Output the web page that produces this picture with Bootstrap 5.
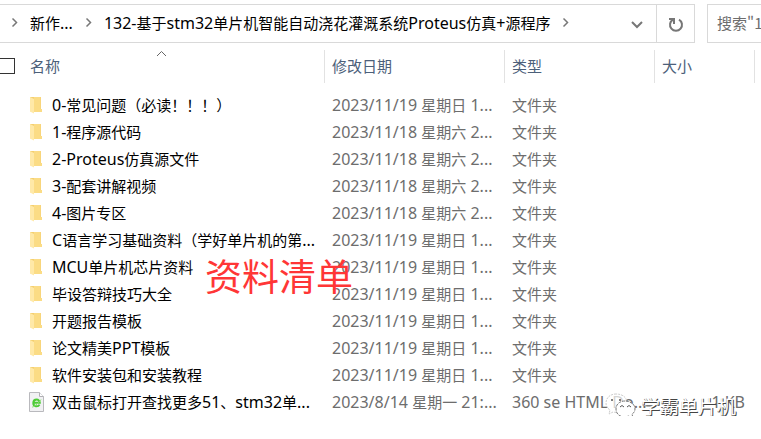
<!DOCTYPE html>
<html lang="zh-CN">
<head>
<meta charset="utf-8">
<meta name="viewport" content="width=device-width, initial-scale=1">
<title>文件资源管理器</title>
<link href="https://cdn.jsdelivr.net/npm/bootstrap@5.3.0/dist/css/bootstrap.min.css" rel="stylesheet">
<style>
  body { font: 15px/24px "Noto Sans CJK SC", sans-serif; color: #000; background: #fff; overflow: hidden; }
  .en { font-family: "Noto Sans", "Noto Sans CJK SC", sans-serif; font-size: 16px; line-height: 1; }
  .toolbar-row { padding-top: 4px; gap: 12px; }
  .address { height: 39px; border: 1px solid #d9d9d9; border-left: 0; min-width: 0; }
  .address a { color: #000; }
  .crumbs { padding: 0 0 2px 11px; gap: 12px; min-width: 0; }
  .tool-btn { border: 0; background: none; padding: 0; width: 38px; }
  .reload { border-left: 1px solid #d9d9d9; }
  .search { width: 54px; height: 39px; border: 1px solid #d9d9d9; border-right: 0; padding: 0 0 2px 9px; outline: 0; }
  .search::placeholder { color: #6d6d6d; opacity: 1; }
  .files { table-layout: fixed; width: 100%; }
  .files th { height: 49px; padding: 0 0 4px 8px; font-weight: 400; color: #4c607a; position: relative; }
  .files th + th::before { content: ""; position: absolute; left: 0; top: 7px; height: 33px; border-left: 1px solid #e2e2e2; }
  .files td { height: 27px; padding: 0 0 2px 8px; color: #6d6d6d; white-space: nowrap; overflow: hidden; }
  .files td.name, .files th.name { padding-left: 0; }
  .files td.name { color: #000; }
  .files td.kb { padding: 0 9px 2px 0; text-align: right; }
  .col-date { width: 180px; } .col-type { width: 150px; } .col-size { width: 100px; } .col-end { width: 7px; }
  .name-in { padding-left: 28px; gap: 7px; height: 24px; }
  .name-in svg { width: 17px; flex: none; }
  .head-in { gap: 15px; }
  .all-check { appearance: none; width: 16px; height: 16px; margin: 0 0 0 -1px; border: 1px solid #333; background: #fff; }
  .sort { position: absolute; left: 156px; top: 7px; }
  .note { position: absolute; left: 205px; top: 248px; font-size: 37px; line-height: 54px; color: #ff3636; }
  .sign { position: absolute; right: 25px; top: 391px; gap: 5px; font-size: 19px; line-height: 30px; color: #fff; text-shadow: 1px 1px 0 #444, 0 1px 0 #777; }
</style>
<script src="https://cdn.jsdelivr.net/npm/bootstrap@5.3.0/dist/js/bootstrap.bundle.min.js"></script>
</head>
<body class="position-relative">
<svg class="d-none" aria-hidden="true">
  <symbol id="folder" viewBox="0 0 17 18"><path d="M2 1h11v12h1v3H4l-2-1z" fill="#f4cf70"/><path d="M6 1h6.500v12H14v3H6z" fill="#fbdc85"/><path d="M2 1l4 2v14.500L2 15.500z" fill="#ffe9a8"/></symbol>
  <symbol id="chev" viewBox="0 0 7 11"><path d="M1.500 1.500l4 4-4 4" fill="none" stroke="#777" stroke-width="1.500"/></symbol>
</svg>

<header class="toolbar-row d-flex">
  <div class="address d-flex flex-grow-1">
    <nav class="crumbs d-flex align-items-center flex-grow-1 text-nowrap" aria-label="路径">
      <svg width="7" height="11"><use href="#chev"/></svg>
      <a href="#" class="text-decoration-none">新作<span class="en">...</span></a>
      <svg width="7" height="11"><use href="#chev"/></svg>
      <a href="#" class="text-decoration-none"><span class="en">132-</span>基于<span class="en">stm32</span>单片机智能自动浇花灌溉系统<span class="en">Proteus</span>仿真<span class="en">+</span>源程序</a>
      <svg width="7" height="11"><use href="#chev"/></svg>
    </nav>
    <button class="tool-btn" aria-label="展开"><svg width="12" height="8" viewBox="0 0 12 8"><path d="M1 1l5 5 5-5" fill="none" stroke="#777" stroke-width="2"/></svg></button>
    <button class="tool-btn reload" aria-label="刷新"><svg width="16" height="16" viewBox="0 0 16 16" fill="none" stroke="#777" stroke-width="2"><path d="M11 2.600A6 6 0 1 1 5 2.600"/><path d="M1 2h5v5"/></svg></button>
  </div>
  <input class="search rounded-0" type="text" aria-label="搜索" placeholder="搜索&quot;1">
</header>

<main>
<table class="files">
  <colgroup><col><col class="col-date"><col class="col-type"><col class="col-size"><col class="col-end"></colgroup>
  <thead><tr>
    <th class="name"><div class="head-in d-flex align-items-center"><input class="all-check" type="checkbox" aria-label="全选">名称</div>
      <svg class="sort" width="11" height="7" viewBox="0 0 11 7"><path d="M1 6l4.500-4.500L10 6" fill="none" stroke="#666"/></svg></th>
    <th>修改日期</th><th>类型</th><th>大小</th><th></th>
  </tr></thead>
  <tbody>
    <tr><td class="name"><div class="name-in d-flex align-items-center"><svg height="18"><use href="#folder"/></svg><span><span class="en">0-</span>常见问题（必读！！！）</span></div></td><td><span class="en">2023/11/19 </span>星期日<span class="en"> 1...</span></td><td>文件夹</td><td></td><td></td></tr>
    <tr><td class="name"><div class="name-in d-flex align-items-center"><svg height="18"><use href="#folder"/></svg><span><span class="en">1-</span>程序源代码</span></div></td><td><span class="en">2023/11/18 </span>星期六<span class="en"> 2...</span></td><td>文件夹</td><td></td><td></td></tr>
    <tr><td class="name"><div class="name-in d-flex align-items-center"><svg height="18"><use href="#folder"/></svg><span><span class="en">2-Proteus</span>仿真源文件</span></div></td><td><span class="en">2023/11/18 </span>星期六<span class="en"> 2...</span></td><td>文件夹</td><td></td><td></td></tr>
    <tr><td class="name"><div class="name-in d-flex align-items-center"><svg height="18"><use href="#folder"/></svg><span><span class="en">3-</span>配套讲解视频</span></div></td><td><span class="en">2023/11/18 </span>星期六<span class="en"> 2...</span></td><td>文件夹</td><td></td><td></td></tr>
    <tr><td class="name"><div class="name-in d-flex align-items-center"><svg height="18"><use href="#folder"/></svg><span><span class="en">4-</span>图片专区</span></div></td><td><span class="en">2023/11/18 </span>星期六<span class="en"> 2...</span></td><td>文件夹</td><td></td><td></td></tr>
    <tr><td class="name"><div class="name-in d-flex align-items-center"><svg height="18"><use href="#folder"/></svg><span><span class="en">C</span>语言学习基础资料（学好单片机的第<span class="en">...</span></span></div></td><td><span class="en">2023/11/19 </span>星期日<span class="en"> 1...</span></td><td>文件夹</td><td></td><td></td></tr>
    <tr><td class="name"><div class="name-in d-flex align-items-center"><svg height="18"><use href="#folder"/></svg><span><span class="en">MCU</span>单片机芯片资料</span></div></td><td><span class="en">2023/11/19 </span>星期日<span class="en"> 1...</span></td><td>文件夹</td><td></td><td></td></tr>
    <tr><td class="name"><div class="name-in d-flex align-items-center"><svg height="18"><use href="#folder"/></svg><span>毕设答辩技巧大全</span></div></td><td><span class="en">2023/11/19 </span>星期日<span class="en"> 1...</span></td><td>文件夹</td><td></td><td></td></tr>
    <tr><td class="name"><div class="name-in d-flex align-items-center"><svg height="18"><use href="#folder"/></svg><span>开题报告模板</span></div></td><td><span class="en">2023/11/19 </span>星期日<span class="en"> 1...</span></td><td>文件夹</td><td></td><td></td></tr>
    <tr><td class="name"><div class="name-in d-flex align-items-center"><svg height="18"><use href="#folder"/></svg><span>论文精美<span class="en">PPT</span>模板</span></div></td><td><span class="en">2023/11/19 </span>星期日<span class="en"> 1...</span></td><td>文件夹</td><td></td><td></td></tr>
    <tr><td class="name"><div class="name-in d-flex align-items-center"><svg height="18"><use href="#folder"/></svg><span>软件安装包和安装教程</span></div></td><td><span class="en">2023/11/19 </span>星期日<span class="en"> 1...</span></td><td>文件夹</td><td></td><td></td></tr>
    <tr><td class="name"><div class="name-in d-flex align-items-center"><svg height="20" viewBox="0 0 17 20"><path d="M1.500.500h10l4 4v15h-14z" fill="#f1f1f3" stroke="#b9b9bd"/><path d="M11.500.500v4h4" fill="#fff" stroke="#b0b0b4"/><path d="M5.500 10.800h6.300c0-4.300-6.300-4.300-6.500.2 0 4 4.800 4.200 6.200 1.600" fill="none" stroke="#4ccb35" stroke-width="2"/><path d="M4 15c1 .5 6-3 9-7.500" fill="none" stroke="#8ae070"/></svg><span>双击鼠标打开查找更多<span class="en">51</span>、<span class="en">stm32</span>单<span class="en">...</span></span></div></td><td><span class="en">2023/8/14 </span>星期一<span class="en"> 21:...</span></td><td><span class="en">360 se HTML Do...</span></td><td class="kb"><span class="en">1 KB</span></td><td></td></tr>
  </tbody>
</table>
</main>

<div class="note">资料清单</div>
<div class="sign d-flex align-items-center">
  <svg width="31" height="27" viewBox="0 0 31 27" fill="#fff" stroke="#777" stroke-width="1"><path d="M11 1C5 1 1 5 1 10c0 3 1 5 4 7l-1 4 4-2c9 2 14-3 14-9S17 1 11 1z" fill-opacity=".7" stroke="#ccc" stroke-dasharray="2 1"/><path d="M20 8c-5 0-9 3-9 8s4 8 9 8l4-1 4 2-1-4c2-1 3-3 3-5 0-5-5-8-10-8z" stroke-dasharray="3 1"/><g fill="#555" stroke="none"><circle cx="7" cy="7" r="1"/><circle cx="15" cy="7" r="1"/></g><path d="M15 14q2-3 4 0M22 14q2-3 4 0" fill="none" stroke="#555"/></svg>
  <span>学霸单片机</span>
</div>
</body>
</html>
